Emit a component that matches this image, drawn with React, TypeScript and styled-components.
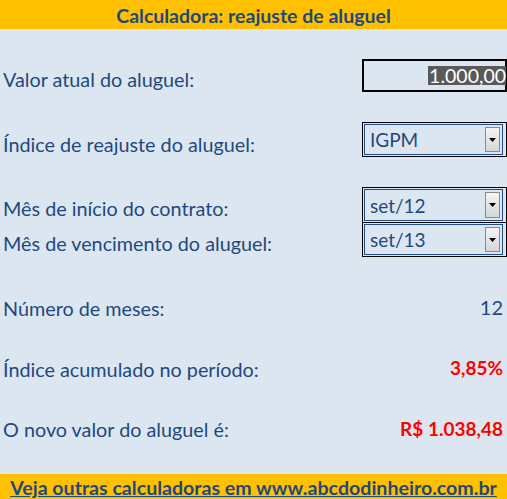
import styled, { createGlobalStyle } from "styled-components";

const GlobalStyle = createGlobalStyle`
  html, body {
    margin: 0;
    padding: 0;
    background: #dce6f1;
  }
  body {
    font-family: Lato, "Liberation Sans", sans-serif;
  }
`;

const DropArrow = () => (
  <svg width="7" height="4" viewBox="0 0 7 4">
    <path d="M0 0 H7 L3.5 4 Z" fill="#000" />
  </svg>
);

type SelectProps = { value: string; height: number };

const ComboBox = ({ value, height }: SelectProps) => (
  <StyledCombo $height={height}>
    <StyledComboInner>
      <StyledComboText>{value}</StyledComboText>
      <StyledDropButton>
        <DropArrow />
      </StyledDropButton>
    </StyledComboInner>
  </StyledCombo>
);

const App = () => {
  return (
    <>
      <GlobalStyle />
      <StyledSheet>
        <StyledHeader>Calculadora: reajuste de aluguel</StyledHeader>

        <StyledBody>
          <StyledRow $height={33}>
            <StyledLabel $shift={6}>Valor atual do aluguel:</StyledLabel>
            <StyledInputBox>
              <StyledSelectedValue>1.000,00</StyledSelectedValue>
            </StyledInputBox>
          </StyledRow>

          <StyledRow $height={35} $gap={30}>
            <StyledLabel $shift={8}>Índice de reajuste do aluguel:</StyledLabel>
            <ComboBox value="IGPM" height={35} />
          </StyledRow>

          <StyledRow $height={36} $gap={30}>
            <StyledLabel $shift={6}>Mês de início do contrato:</StyledLabel>
            <ComboBox value="set/12" height={36} />
          </StyledRow>
          <StyledRow $height={35} $gap={-1}>
            <StyledLabel $shift={6}>Mês de vencimento do aluguel:</StyledLabel>
            <ComboBox value="set/13" height={35} />
          </StyledRow>

          <StyledRow $height={60} $gap={20}>
            <StyledLabel $shift={2}>Número de meses:</StyledLabel>
            <StyledValue>12</StyledValue>
          </StyledRow>
          <StyledRow $height={60}>
            <StyledLabel $shift={4}>Índice acumulado no período:</StyledLabel>
            <StyledValue $result>3,85%</StyledValue>
          </StyledRow>
          <StyledRow $height={62}>
            <StyledLabel $shift={2}>O novo valor do aluguel é:</StyledLabel>
            <StyledValue $result>R$ 1.038,48</StyledValue>
          </StyledRow>
        </StyledBody>

        <StyledFooter>
          <StyledLink href="#">
            Veja outras calculadoras em www.abcdodinheiro.com.br
          </StyledLink>
        </StyledFooter>
      </StyledSheet>
    </>
  );
};

export default App;

const StyledSheet = styled.div`
  width: 507px;
  height: 499px;
  display: flex;
  flex-direction: column;
  background: #dce6f1;
  overflow: hidden;
`;

const StyledHeader = styled.div`
  height: 29px;
  flex: none;
  background: #ffc000;
  color: #1f497d;
  font-weight: bold;
  font-size: 19.5px;
  display: flex;
  align-items: center;
  justify-content: center;
  padding-top: 1px;
  box-sizing: border-box;
`;

const StyledBody = styled.div`
  flex: 1;
  display: flex;
  flex-direction: column;
  padding-top: 30px;
`;

const StyledRow = styled.div<{ $height: number; $gap?: number }>`
  height: ${(p) => p.$height}px;
  margin-top: ${(p) => p.$gap ?? 0}px;
  display: grid;
  grid-template-columns: 362px 145px;
  align-items: center;
`;

const StyledLabel = styled.div<{ $shift: number }>`
  padding-left: 3px;
  padding-top: ${(p) => p.$shift}px;
  font-size: 19.8px;
  color: #1f497d;
  white-space: nowrap;
`;

const StyledInputBox = styled.div`
  height: 100%;
  box-sizing: border-box;
  border: 2px solid #000;
  display: flex;
  align-items: center;
  justify-content: flex-end;
`;

const StyledSelectedValue = styled.span`
  background: #595959;
  color: #fff;
  font-size: 19.5px;
  line-height: 19px;
  padding: 0 0 0 1px;
  margin-right: -1px;
`;

const StyledCombo = styled.div<{ $height: number }>`
  height: ${(p) => p.$height}px;
  box-sizing: border-box;
  border: 1px solid #000;
  padding: 1px 3px 1px 1px;
`;

const StyledComboInner = styled.div`
  height: 100%;
  box-sizing: border-box;
  border: 1px solid #254b85;
  display: flex;
  align-items: center;
  justify-content: space-between;
  padding: 2px 2px 2px 5px;
`;

const StyledComboText = styled.span`
  font-size: 19px;
  color: #1f497d;
`;

const StyledDropButton = styled.div`
  width: 15px;
  height: 100%;
  box-sizing: border-box;
  border: 1px solid #8a8a8a;
  background: linear-gradient(#f4f4f4, #d6d6d6);
  display: flex;
  align-items: center;
  justify-content: center;
`;

const StyledValue = styled.div<{ $result?: boolean }>`
  text-align: right;
  padding-right: 4px;
  font-size: ${(p) => (p.$result ? 19 : 20)}px;
  color: ${(p) => (p.$result ? "#ff0000" : "#1f497d")};
  font-weight: ${(p) => (p.$result ? "bold" : "normal")};
`;

const StyledFooter = styled.div`
  height: 25px;
  flex: none;
  background: #ffc000;
  display: flex;
  align-items: center;
  justify-content: center;
  padding-top: 1px;
  box-sizing: border-box;
`;

const StyledLink = styled.a`
  color: #1f497d;
  font-weight: bold;
  font-size: 19.6px;
  text-decoration: underline;
  white-space: nowrap;
`;
